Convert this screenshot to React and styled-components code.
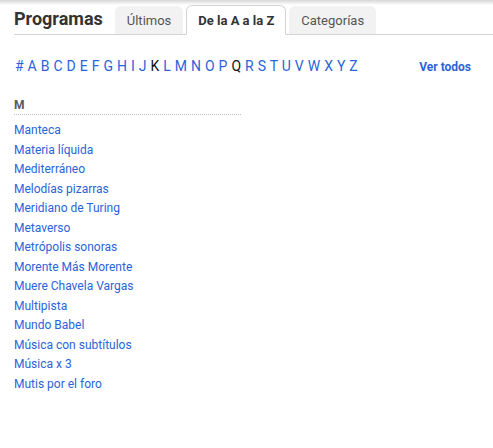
import React from "react";
import styled, { createGlobalStyle } from "styled-components";

const Global = createGlobalStyle`
  html, body { margin: 0; padding: 0; background: #fff; }
  body { font-family: Roboto, "Liberation Sans", Arial, sans-serif; }
`;

const Page = styled.div`
  position: relative;
  width: 493px;
  min-height: 448px;
  background: #fff;
  &::before {
    content: "";
    position: absolute;
    left: 0; right: 0; top: 0;
    height: 5px;
    background: linear-gradient(#d6d6d6, rgba(255,255,255,0));
  }
`;

const Header = styled.div`
  display: flex;
  align-items: flex-end;
  margin-left: 14px;
  padding-top: 5px;
  border-bottom: 1px solid #d4d4d4;
  height: 29px;
`;

const Title = styled.h1`
  margin: 0 12px 0 0;
  font-size: 18px;
  font-weight: 700;
  color: #333;
  align-self: center;
  line-height: 28px;
  padding-bottom: 2px;
`;

const Tab = styled.div`
  box-sizing: border-box;
  height: ${(p) => (p.$active ? "30px" : "28px")};
  margin-bottom: ${(p) => (p.$active ? "-1px" : "0")};
  margin-right: 3px;
  padding: 0 ${(p) => p.$pad}px;
  display: flex;
  align-items: center;
  font-size: 13px;
  font-weight: ${(p) => (p.$active ? 700 : 400)};
  color: ${(p) => (p.$active ? "#333" : "#555")};
  background: ${(p) => (p.$active ? "#fff" : "#f2f2f2")};
  border: 1px solid ${(p) => (p.$active ? "#d4d4d4" : "#f2f2f2")};
  border-bottom: ${(p) => (p.$active ? "1px solid #fff" : "none")};
  border-radius: 6px 6px 0 0;
  padding-top: ${(p) => (p.$active ? "1px" : "0")};
`;

const LetterBar = styled.div`
  display: flex;
  align-items: baseline;
  justify-content: space-between;
  margin: 23px 22px 0 15px;
`;

const Letters = styled.div`
  font-size: 14px;
  letter-spacing: 0.25px;
  color: #2b63d9;
`;

const Letter = styled.span`
  color: ${(p) => (p.$empty ? "#111" : "#2b63d9")};
`;

const SeeAll = styled.a`
  font-size: 12px;
  font-weight: 700;
  color: #2b63d9;
  text-decoration: none;
`;

const Section = styled.section`
  margin: 24px 0 0 14px;
  width: 227px;
`;

const SectionTitle = styled.h2`
  margin: 0;
  font-size: 12px;
  font-weight: 700;
  color: #5a5a5a;
  line-height: 14px;
  padding-bottom: 2px;
  border-bottom: 1px dotted #bdbdbd;
`;

const List = styled.ul`
  list-style: none;
  margin: 6px 0 0;
  padding: 0;
`;

const Item = styled.li`
  font-size: 12px;
  line-height: 19.5px;
  color: #2b63d9;
`;

const letters = ["#", ..."ABCDEFGHIJKLMNOPQRSTUVWXYZ".split("")];
const emptyLetters = new Set(["K", "Q"]);

const programs = [
  "Manteca",
  "Materia líquida",
  "Mediterráneo",
  "Melodías pizarras",
  "Meridiano de Turing",
  "Metaverso",
  "Metrópolis sonoras",
  "Morente Más Morente",
  "Muere Chavela Vargas",
  "Multipista",
  "Mundo Babel",
  "Música con subtítulos",
  "Música x 3",
  "Mutis por el foro",
];

export default function App() {
  return (
    <Page>
      <Global />
      <Header>
        <Title>Programas</Title>
        <Tab $pad={11}>Últimos</Tab>
        <Tab $active $pad={11}>De la A a la Z</Tab>
        <Tab $pad={11}>Categorías</Tab>
      </Header>
      <LetterBar>
        <Letters>
          {letters.map((l, i) => (
            <React.Fragment key={l}>
              {i > 0 && " "}
              <Letter $empty={emptyLetters.has(l)}>{l}</Letter>
            </React.Fragment>
          ))}
        </Letters>
        <SeeAll href="#">Ver todos</SeeAll>
      </LetterBar>
      <Section>
        <SectionTitle>M</SectionTitle>
        <List>
          {programs.map((p) => (
            <Item key={p}>{p}</Item>
          ))}
        </List>
      </Section>
    </Page>
  );
}
